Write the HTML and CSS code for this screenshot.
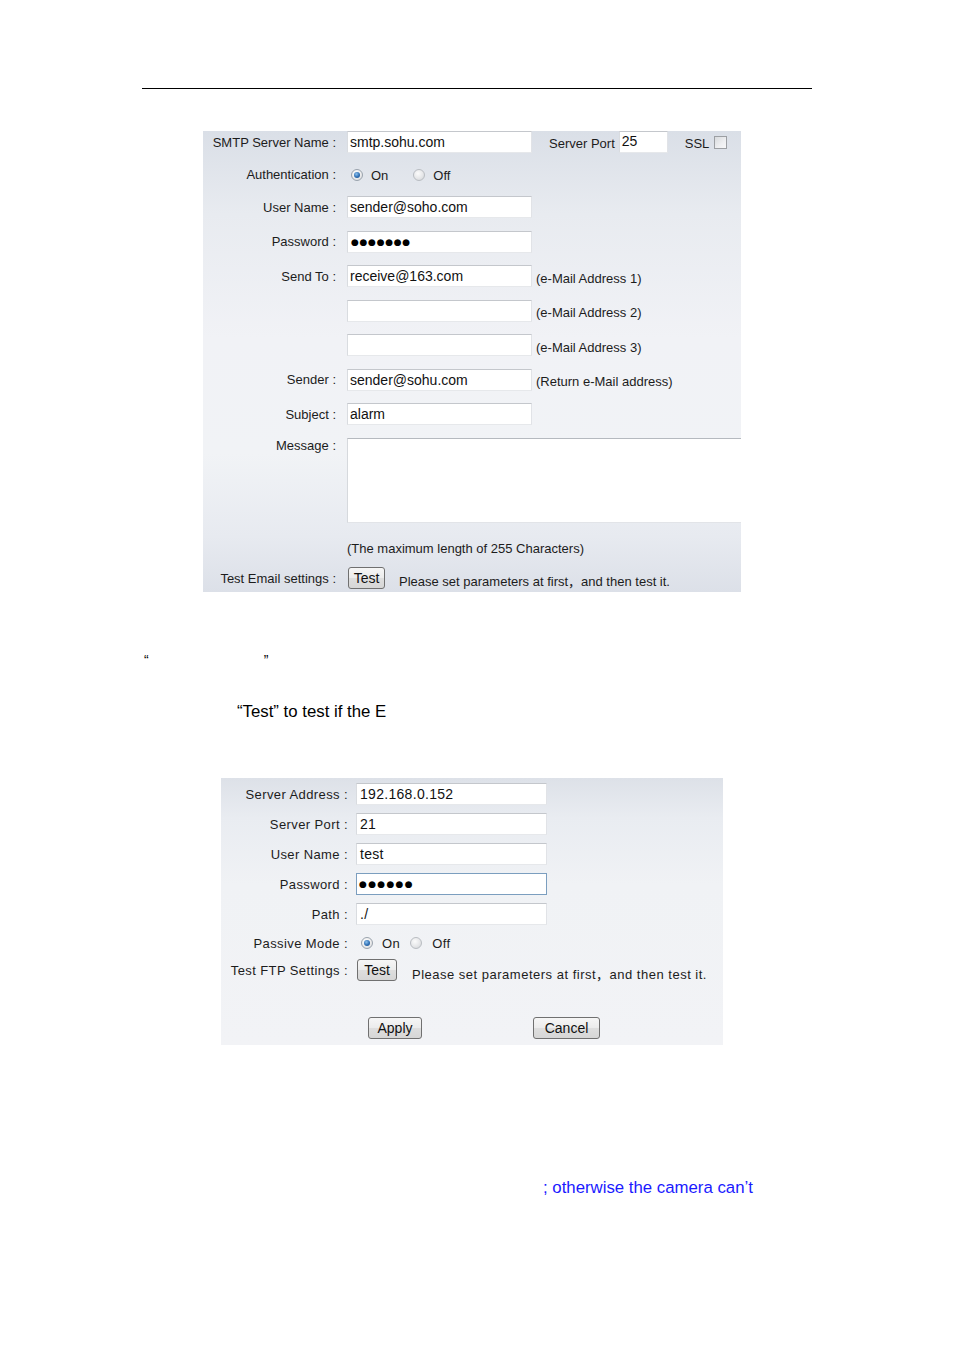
FILE: index.html
```html
<!DOCTYPE html>
<html lang="en">
<head>
<meta charset="utf-8">
<title>Email and FTP settings</title>
<link rel="stylesheet" href="styles.css">
</head>
<body>
<div class="page">
  <div class="rule"></div>

  <div class="panel mail">
    <div class="row">
      <span class="lbl">SMTP Server Name :</span>
      <span class="field">smtp.sohu.com</span>
      <span class="port-lbl">Server Port</span>
      <span class="field port">25</span>
      <span class="ssl">SSL</span>
      <span class="check"></span>
    </div>
    <div class="row auth">
      <span class="lbl">Authentication :</span>
      <span class="radio on"></span><span class="opt">On</span>
      <span class="radio off wide"></span><span class="opt">Off</span>
    </div>
    <div class="row">
      <span class="lbl">User Name :</span>
      <span class="field">sender@soho.com</span>
    </div>
    <div class="row">
      <span class="lbl">Password :</span>
      <span class="field dots">●●●●●●●</span>
    </div>
    <div class="row">
      <span class="lbl">Send To :</span>
      <span class="field">receive@163.com</span>
      <span class="hint">(e-Mail Address 1)</span>
    </div>
    <div class="row">
      <span class="lbl"></span>
      <span class="field"></span>
      <span class="hint">(e-Mail Address 2)</span>
    </div>
    <div class="row">
      <span class="lbl"></span>
      <span class="field"></span>
      <span class="hint">(e-Mail Address 3)</span>
    </div>
    <div class="row">
      <span class="lbl">Sender :</span>
      <span class="field">sender@sohu.com</span>
      <span class="hint">(Return e-Mail address)</span>
    </div>
    <div class="row">
      <span class="lbl">Subject :</span>
      <span class="field">alarm</span>
    </div>
    <div class="row message">
      <span class="lbl">Message :</span>
      <span class="textarea"></span>
    </div>
    <div class="row maxlen">
      <span class="lbl"></span>
      <span>(The maximum length of 255 Characters)</span>
    </div>
    <div class="row test">
      <span class="lbl">Test Email settings :</span>
      <span class="btn btn-test">Test</span>
      <span class="note-txt">Please set parameters at first，and then test it.</span>
    </div>
  </div>

  <p class="quotes"><span>“</span><span class="q2">”</span></p>
  <p class="sentence">“Test” to test if the E</p>

  <div class="panel ftp">
    <div class="row">
      <span class="lbl">Server Address :</span>
      <span class="field">192.168.0.152</span>
    </div>
    <div class="row">
      <span class="lbl">Server Port :</span>
      <span class="field">21</span>
    </div>
    <div class="row">
      <span class="lbl">User Name :</span>
      <span class="field">test</span>
    </div>
    <div class="row">
      <span class="lbl">Password :</span>
      <span class="field dots focus">●●●●●●</span>
    </div>
    <div class="row">
      <span class="lbl">Path :</span>
      <span class="field">./</span>
    </div>
    <div class="row passive">
      <span class="lbl">Passive Mode :</span>
      <span class="radio on"></span><span class="opt">On</span>
      <span class="radio off"></span><span class="opt">Off</span>
    </div>
    <div class="row test">
      <span class="lbl">Test FTP Settings :</span>
      <span class="btn btn-test">Test</span>
      <span class="note-txt">Please set parameters at first，and then test it.</span>
    </div>
    <div class="row actions">
      <span class="btn btn-apply">Apply</span>
      <span class="btn btn-cancel">Cancel</span>
    </div>
  </div>

  <p class="blue">; otherwise the camera can’t</p>
</div>
</body>
</html>
```

FILE: styles.css
```css
html, body {
  margin: 0;
  padding: 0;
  background: #ffffff;
}

body {
  font-family: "Liberation Sans", Arial, "Noto Sans CJK SC", sans-serif;
  color: #1c1c1c;
}

.page {
  padding-top: 88px;
  min-height: 1261px;
}

.rule {
  margin-left: 142px;
  width: 670px;
  height: 1px;
  background: #000;
}

/* ---------- panels ---------- */
.panel {
  display: flex;
  flex-direction: column;
  box-sizing: border-box;
  background: linear-gradient(#dadfe7 0%, #e8ebf0 18%, #f1f2f6 45%, #f1f3f6 70%, #e7eaf0 88%, #dce0e8 100%);
}

.row {
  display: flex;
  align-items: center;
  height: 22px;
  flex-shrink: 0;
  white-space: nowrap;
}

.lbl {
  flex-shrink: 0;
  text-align: right;
}

.field {
  display: block;
  flex-shrink: 0;
  box-sizing: border-box;
  height: 22px;
  background: #fff;
  border: 1px solid;
  border-color: #c4c7cc #e1e3e7 #e6e8eb #d9dce0;
  font-size: 14px;
  line-height: 20px;
  color: #111;
  overflow: hidden;
}

.dots {
  font-family: "DejaVu Sans", sans-serif;
  font-size: 9px;
  letter-spacing: 0.7px;
  color: #000;
}

/* radio & checkbox */
.radio {
  flex-shrink: 0;
  box-sizing: border-box;
  width: 12px;
  height: 12px;
  border-radius: 50%;
  border: 1px solid #9aa3ad;
  background: radial-gradient(circle at 40% 35%, #ffffff 0%, #f0f0f0 45%, #d3d5d8 100%);
  position: relative;
}

.radio.on::after {
  content: "";
  position: absolute;
  left: 2px;
  top: 2px;
  width: 6px;
  height: 6px;
  border-radius: 50%;
  background: radial-gradient(circle at 40% 35%, #8ec2ee 0%, #2f6fb3 55%, #1b4b86 100%);
}

.radio.off {
  border-color: #b9bdc2;
  background: radial-gradient(circle at 40% 35%, #fbfbfb 0%, #e6e7e9 55%, #cfd1d4 100%);
}

.check {
  flex-shrink: 0;
  box-sizing: border-box;
  width: 13px;
  height: 13px;
  border: 1px solid #9c9fa3;
  background: linear-gradient(135deg, #d8dadd 0%, #eeeff1 60%, #f7f7f8 100%);
}

/* buttons */
.btn {
  display: block;
  flex-shrink: 0;
  box-sizing: border-box;
  height: 22px;
  border: 1px solid #707070;
  border-radius: 3px;
  background: linear-gradient(#f6f6f6 0%, #ececec 48%, #dedede 52%, #d6d6d6 100%);
  font-size: 14px;
  line-height: 20px;
  text-align: center;
  color: #111;
  letter-spacing: 0;
}

/* ---------- e-mail panel ---------- */
.mail {
  margin: 42px 0 0 203px;
  width: 538px;
  height: 461px;
  font-size: 13px;
}

.mail .row + .row {
  margin-top: 12.5px;
}

.mail .lbl {
  width: 133px;
  margin-right: 11px;
}

.mail .field {
  width: 185px;
  padding-left: 2px;
}

.mail .port-lbl {
  margin-left: 17px;
  margin-right: 4px;
  padding-top: 3px;
}

.mail .field.port {
  width: 49px;
  padding-left: 2px;
  line-height: 18px;
}

.mail .ssl {
  margin-left: 17px;
  margin-right: 5px;
  padding-top: 3px;
}

.mail .auth {
  height: 18px;
}

.mail .auth .radio {
  margin-left: 4px;
}

.mail .auth .radio.wide {
  margin-left: 25px;
}

.mail .opt {
  margin-left: 8px;
  padding-top: 1px;
}

.mail .dots {
  padding-left: 3px;
}

.mail .hint {
  margin-left: 4px;
  padding-top: 4px;
}

.mail .message {
  height: 85px;
  align-items: flex-start;
}

.mail .message .lbl {
  line-height: 15px;
}

.textarea {
  display: block;
  box-sizing: border-box;
  width: 394px;
  height: 85px;
  background: #fff;
  border-top: 1px solid #b5b9bf;
  border-left: 1px solid #d6d9dd;
  border-bottom: 1px solid #e2e4e8;
}

.mail .row.maxlen {
  height: 16px;
  margin-top: 17.5px;
}

.mail .row.test {
  margin-top: 11px;
}

.mail .btn-test {
  width: 37px;
  margin-left: 1px;
}

.mail .note-txt {
  margin-left: 14px;
  padding-top: 5px;
}

/* ---------- text between panels ---------- */
.quotes {
  margin: 61px 0 0 144px;
  font-size: 14px;
  line-height: 14px;
  height: 14px;
  color: #000;
}

.quotes .q2 {
  margin-left: 115px;
}

.sentence {
  margin: 35px 0 0 237px;
  font-size: 16.8px;
  line-height: 19px;
  color: #000;
}

/* ---------- FTP panel ---------- */
.ftp {
  margin: 57px 0 0 221px;
  width: 502px;
  height: 267px;
  padding-top: 5px;
  font-size: 13px;
  letter-spacing: 0.4px;
  background: linear-gradient(#dde1e8 0%, #e9ecf1 15%, #f0f2f5 40%, #f2f3f6 100%);
}

.ftp .row + .row {
  margin-top: 8px;
}

.ftp .lbl {
  width: 127px;
  margin-right: 8px;
}

.ftp .field {
  width: 191px;
  padding-left: 3px;
  letter-spacing: 0.3px;
}

.ftp .field.focus {
  border-color: #7b9ebf;
}

.ftp .dots {
  letter-spacing: 1.3px;
  padding-left: 2px;
}

.ftp .row.passive {
  height: 20px;
}

.ftp .passive .radio {
  margin-left: 5px;
}

.ftp .passive .radio.off {
  margin-left: 10px;
}

.ftp .passive .radio.on + .opt {
  margin-left: 9px;
}

.ftp .passive .radio.off + .opt {
  margin-left: 10px;
}

.ftp .row.test {
  margin-top: 6px;
}

.ftp .btn-test {
  width: 40px;
  margin-left: 1px;
}

.ftp .note-txt {
  margin-left: 15px;
  padding-top: 6px;
  letter-spacing: 0.5px;
}

.ftp .row.actions {
  margin-top: 36px;
}

.btn-apply {
  width: 54px;
  margin-left: 147px;
}

.btn-cancel {
  width: 67px;
  margin-left: 111px;
}

/* ---------- blue note ---------- */
.blue {
  margin: 133px 0 0 543px;
  font-size: 16.8px;
  line-height: 19px;
  color: #1a1aff;
}
```
